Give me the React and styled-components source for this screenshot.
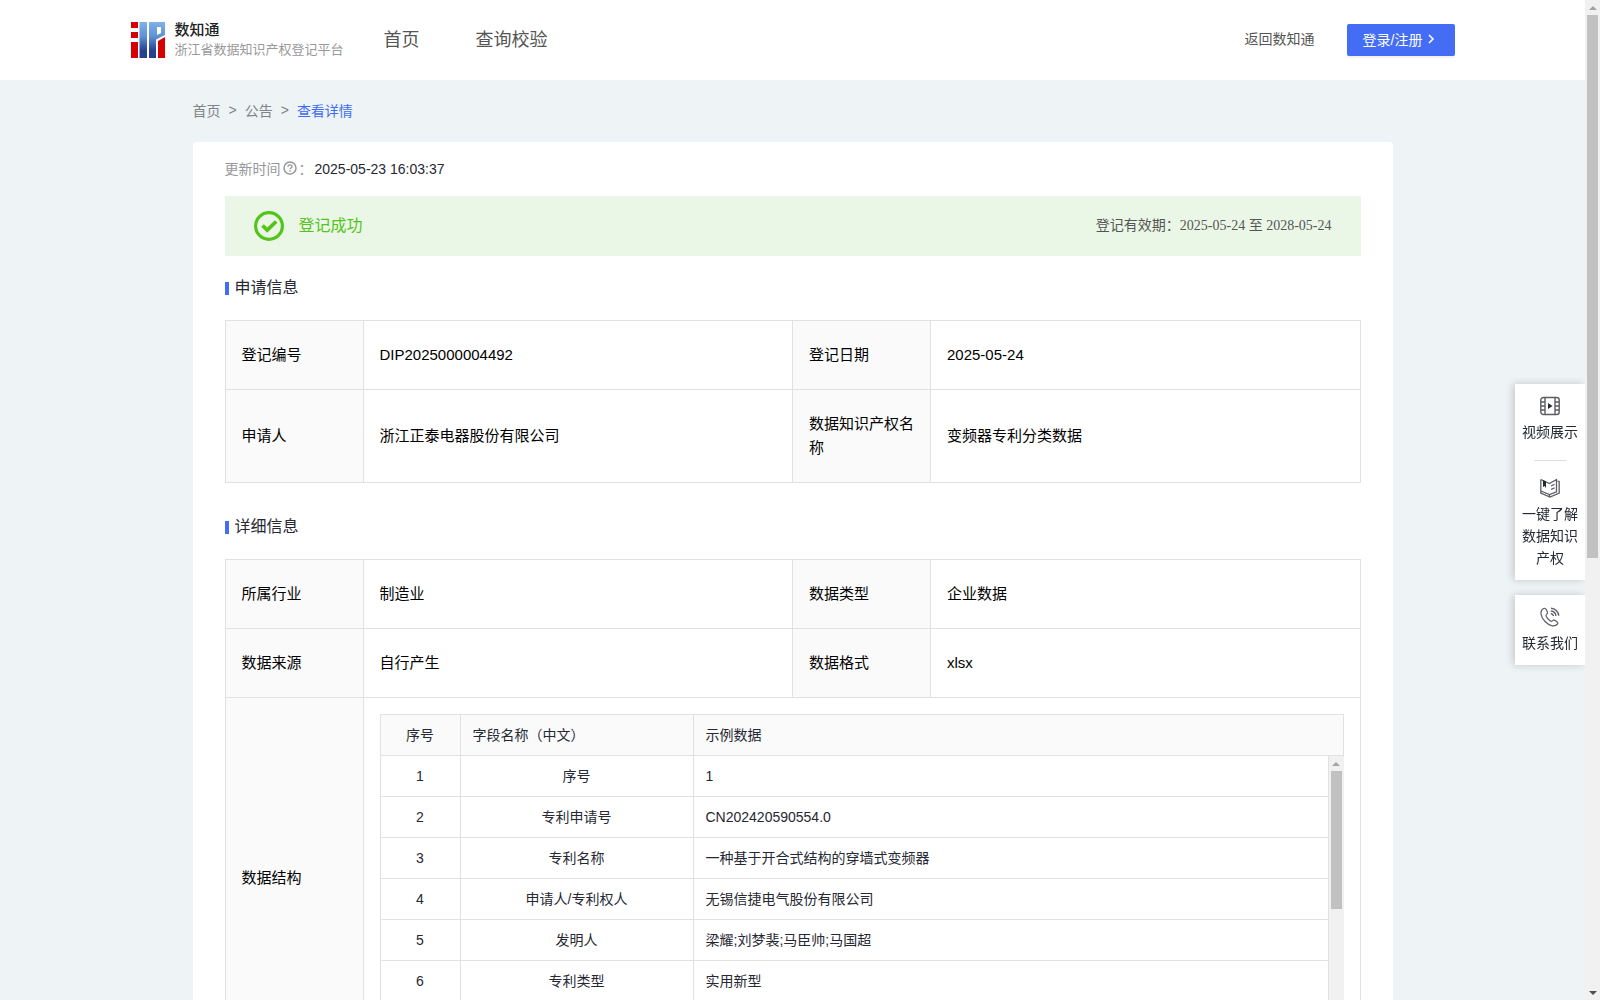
import React from 'react';
import styled, { createGlobalStyle } from 'styled-components';

const sans = '"Liberation Sans", "Noto Sans CJK SC", sans-serif';
const serif = '"Liberation Serif", "Noto Sans CJK SC", serif';

const GlobalStyle = createGlobalStyle`
  *, *::before, *::after {
    box-sizing: border-box;
  }

  body {
    margin: 0;
    font-family: ${sans};
    font-size: 14px;
    color: #262833;
  }
`;

const Shell = styled.div`
  display: flex;
  height: 100vh;
`;

const Page = styled.div`
  flex: 1;
  min-width: 0;
  overflow-y: auto;
  scrollbar-width: none;
  background: #eef3f6;
`;

const Track = styled.div`
  display: flex;
  flex-direction: column;
  flex: none;
  width: 15px;
  background: #f1f1f1;
`;

const TrackButton = styled.span`
  display: flex;
  align-items: center;
  justify-content: center;
  height: 15px;

  &::before {
    content: '';
    border: solid transparent;
    border-width: 0 4px;
    ${props => (props.$down ? 'border-top: 4px solid #505050;' : 'border-bottom: 4px solid #a3a3a3;')}
  }
`;

const TrackBody = styled.div`
  flex: 1;
  padding: 0 2px;
`;

const Thumb = styled.div`
  height: ${props => props.$size}%;
  background: #c1c1c1;
`;

const Header = styled.header`
  background: #fff;
`;

const HeaderInner = styled.div`
  display: flex;
  align-items: center;
  max-width: 1324px;
  height: 80px;
  margin: 0 auto;
`;

const Brand = styled.a`
  display: flex;
  align-items: center;
  gap: 10px;
  color: #222;
  text-decoration: none;
`;

const BrandName = styled.div`
  font-size: 15px;
  font-weight: 500;
  line-height: 20px;
`;

const BrandSub = styled.div`
  font-size: 13px;
  line-height: 20px;
  color: #999;
`;

const Nav = styled.nav`
  display: flex;
  flex: 1;
  gap: 56px;
  margin-left: 40px;
`;

const NavLink = styled.a`
  padding-bottom: 4px;
  font-size: ${props => (props.$small ? 14 : 18)}px;
  color: #555;
  text-decoration: none;
`;

const LoginButton = styled.button`
  display: flex;
  align-items: center;
  gap: 2px;
  height: 32px;
  margin-left: 32px;
  padding: 0 16px 2px;
  border: 0;
  border-radius: 2px;
  background: #446df6;
  box-shadow: 0 2px 0 rgba(0, 0, 0, 0.05);
  color: #fff;
  font: 14px ${sans};
`;

const Container = styled.main`
  max-width: 1200px;
  margin: 0 auto;
  padding-bottom: 80px;
`;

const Breadcrumb = styled.nav`
  display: flex;
  align-items: center;
  gap: 8px;
  height: 62px;
  padding-bottom: 2px;
  color: #808388;
`;

const Crumb = styled.a`
  color: ${props => (props.$active ? '#3d6cf5' : 'inherit')};
  text-decoration: none;
`;

const Card = styled.section`
  padding: 16px 32px 60px;
  border-radius: 4px;
  background: #fff;
`;

const UpdateTime = styled.div`
  display: flex;
  align-items: center;
  height: 22px;
  margin-bottom: 16px;
`;

const UpdateLabel = styled.span`
  display: flex;
  align-items: center;
  gap: 2px;
  margin-right: 2px;
  padding-bottom: 2px;
  color: #96979b;
`;

const StatusBar = styled.div`
  display: flex;
  align-items: center;
  height: 60px;
  padding: 0 29px;
  background: #ebf7e6;
`;

const StatusText = styled.span`
  flex: 1;
  margin-left: 15px;
  padding-bottom: 4px;
  font-size: 16px;
  color: #52c41a;
`;

const Validity = styled.span`
  padding-bottom: 4px;
  font-family: ${serif};
  color: #555;
`;

const SectionTitle = styled.h2`
  display: flex;
  align-items: center;
  gap: 6px;
  height: 20px;
  margin: ${props => (props.$first ? 20 : 32)}px 0 24px;
  font-size: 16px;
  font-weight: 400;

  &::before {
    content: '';
    width: 4px;
    height: 13px;
    margin-top: 4px;
    background: #446df6;
  }
`;

const InfoTable = styled.table`
  width: 100%;
  table-layout: fixed;
  border-collapse: collapse;
  font-size: 15px;
  line-height: 24px;
  color: #000;
`;

const Label = styled.th`
  padding: 22px 16px;
  border: 1px solid #e1e1e1;
  background: #fafafa;
  font-weight: 400;
  text-align: left;
`;

const Value = styled.td`
  padding: ${props => (props.$nested ? 16 : 22)}px 16px;
  border: 1px solid #e1e1e1;
`;

const FieldGrid = styled.table`
  width: 100%;
  table-layout: fixed;
  border-collapse: separate;
  border-spacing: 0;
  font-size: 14px;
  line-height: 24px;
  color: #262833;
`;

const FieldBody = styled.div`
  display: flex;
  height: 286px;
`;

const FieldScroll = styled.div`
  flex: 1;
  min-width: 0;
  overflow-y: auto;
  scrollbar-width: none;
`;

const FieldCell = styled.td`
  padding: 8px 12px;
  border: solid #e1e1e1;
  border-width: 0 1px 1px 0;
  font-weight: 400;
  text-align: ${props => (props.$center ? 'center' : 'left')};

  &:first-child {
    border-left-width: 1px;
  }
`;

const FieldHeadCell = styled(FieldCell).attrs({ as: 'th' })`
  border-top-width: 1px;
  background: #fafafa;
`;

const Rail = styled.aside`
  position: fixed;
  top: 384px;
  right: 15px;
  display: flex;
  flex-direction: column;
  gap: 15px;
  width: 70px;
`;

const RailBox = styled.div`
  padding: 0 6px;
  background: #fff;
  box-shadow: -2px 0 8px rgba(0, 0, 0, 0.18);
  clip-path: inset(-12px 0 -12px -12px);
`;

const RailLink = styled.a`
  display: flex;
  flex-direction: column;
  align-items: center;
  padding: 12px 0 11px;
  line-height: 22px;
  color: #262833;
  text-align: center;
  text-decoration: none;

  svg {
    margin-bottom: 5px;
  }
`;

const RailDivider = styled.hr`
  width: 32px;
  height: 1px;
  margin: 6px auto 5px;
  border: 0;
  background: #ddd;
`;

const Logo = () => (
  <svg width="34" height="36" viewBox="0 0 34 36" aria-hidden="true">
    <defs>
      <linearGradient id="logo-blue" gradientUnits="userSpaceOnUse" x1="0" y1="0" x2="0" y2="36">
        <stop offset="0" stopColor="#7fb2ea" />
        <stop offset="0.4" stopColor="#5f92d3" />
        <stop offset="0.8" stopColor="#27408f" />
        <stop offset="1" stopColor="#27408f" />
      </linearGradient>
    </defs>
    <path d="M0 0h7v6H0zM0 10h7v6H0zM0 20h7v16H0z" fill="#d60000" />
    <path d="M8.500 0h7.500v36H8.500zM18 0h16v13l-9 4.500V36h-7zM26 5v8l4-2V5z" fill="url(#logo-blue)" fillRule="evenodd" />
    <path d="M27 19l7-4v21h-7z" fill="#d60000" />
  </svg>
);

const HelpIcon = () => (
  <svg width="14" height="14" viewBox="0 0 14 14" fill="none" stroke="#96979b" aria-hidden="true">
    <circle cx="7" cy="7" r="6" strokeWidth="1.5" />
    <path d="M5 5.800c0-2.600 4-2.600 4-.1C9 7 7 7 7 8.300M7 9.300v1.400" strokeWidth="1.400" />
  </svg>
);

const SuccessIcon = () => (
  <svg width="30" height="30" viewBox="0 0 30 30" fill="none" stroke="#52c41a" aria-hidden="true">
    <circle cx="15" cy="15" r="13.400" strokeWidth="3.200" />
    <path d="M8.500 14.500l4.700 4.700 9-8.700" strokeWidth="3.800" />
  </svg>
);

const ChevronIcon = () => (
  <svg width="14" height="14" viewBox="0 0 14 14" fill="none" stroke="#fff" strokeWidth="1.600" aria-hidden="true">
    <path d="M4 3l4 4-4 4" />
  </svg>
);

const VideoIcon = () => (
  <svg width="20" height="20" viewBox="0 0 20 20" fill="none" stroke="#5c5e64" strokeWidth="1.400" aria-hidden="true">
    <rect x="0.800" y="1.500" width="18.400" height="17" rx="2.500" />
    <path d="M5 1.500v17M15 1.500v17M1 6h4M1 10h4M1 14h4M15 6h4M15 10h4M15 14h4" />
    <path d="M8 7l4.500 3L8 13z" fill="#262833" stroke="none" />
  </svg>
);

const BookIcon = () => (
  <svg width="20" height="20" viewBox="0 0 20 20" fill="none" stroke="#5c5e64" strokeWidth="1.300" aria-hidden="true">
    <path d="M.8 1.500v13.500l9.200 4 9.200-4V3.500l-1.700-.5M.8 1.500L9.500 5.500l7-4v12.300L9.500 16.500.8 13M9.500 16.500v2" />
    <path d="M11 8l3.500-1.700M11 11.500l3.500-1.700" />
    <path d="M3 2v7l1.500-1L6 10V3.500z" fill="#262833" stroke="none" />
  </svg>
);

const PhoneIcon = () => (
  <svg width="20" height="20" viewBox="0 0 20 20" fill="none" stroke="#5c5e64" strokeWidth="1.200" aria-hidden="true">
    <path d="M3.500 1.500C-1 4 1 10.500 5 14.500s9.500 6 12.500 2.500c.8-1-.2-2-1-2.600-1.800-1.300-2.600-1.800-3.800-.8-1 .9-1.700 1-2.700.2-1.700-1.300-3-2.800-3.800-4.600-.4-1 0-1.600.8-2.300 1.100-1 .5-2-.5-4-.7-1.400-1.800-2-3-1.400z" />
    <path d="M11 1.200c4 .2 7.300 3.400 7.800 7.500M10.800 4c2.800.2 4.800 2.200 5.200 4.800M10.700 6.500c1.600.2 2.500 1 2.800 2.500" strokeWidth="1.400" />
  </svg>
);

const applyInfo = [
  ['登记编号', 'DIP2025000004492', '登记日期', '2025-05-24'],
  ['申请人', '浙江正泰电器股份有限公司', '数据知识产权名称', '变频器专利分类数据'],
];

const detailInfo = [
  ['所属行业', '制造业', '数据类型', '企业数据'],
  ['数据来源', '自行产生', '数据格式', 'xlsx'],
];

const fields = [
  ['序号', '1'],
  ['专利申请号', 'CN202420590554.0'],
  ['专利名称', '一种基于开合式结构的穿墙式变频器'],
  ['申请人/专利权人', '无锡信捷电气股份有限公司'],
  ['发明人', '梁耀;刘梦裴;马臣帅;马国超'],
  ['专利类型', '实用新型'],
];

const Scrollbar = ({ size }) => (
  <Track aria-hidden="true">
    <TrackButton />
    <TrackBody>
      <Thumb $size={size} />
    </TrackBody>
    <TrackButton $down />
  </Track>
);

const InfoCols = () => (
  <colgroup>
    <col width="138" />
    <col />
    <col width="138" />
    <col />
  </colgroup>
);

const InfoRows = ({ rows }) => rows.map(([labelA, valueA, labelB, valueB]) => (
  <tr key={labelA}>
    <Label scope="row">{labelA}</Label>
    <Value>{valueA}</Value>
    <Label scope="row">{labelB}</Label>
    <Value>{valueB}</Value>
  </tr>
));

const FieldCols = () => (
  <colgroup>
    <col width="81" />
    <col width="233" />
    <col />
  </colgroup>
);

const FieldTable = () => (
  <>
    <FieldGrid>
      <FieldCols />
      <thead>
        <tr>
          <FieldHeadCell $center>序号</FieldHeadCell>
          <FieldHeadCell>字段名称（中文）</FieldHeadCell>
          <FieldHeadCell>示例数据</FieldHeadCell>
        </tr>
      </thead>
    </FieldGrid>
    <FieldBody>
      <FieldScroll>
        <FieldGrid>
          <FieldCols />
          <tbody>
            {fields.map(([name, sample], index) => (
              <tr key={name}>
                <FieldCell $center>{index + 1}</FieldCell>
                <FieldCell $center>{name}</FieldCell>
                <FieldCell>{sample}</FieldCell>
              </tr>
            ))}
          </tbody>
        </FieldGrid>
      </FieldScroll>
      <Scrollbar size={54} />
    </FieldBody>
  </>
);

const SideRail = () => (
  <Rail>
    <RailBox>
      <RailLink href="#video">
        <VideoIcon />
        视频展示
      </RailLink>
      <RailDivider />
      <RailLink href="#guide">
        <BookIcon />
        一键了解数据知识产权
      </RailLink>
    </RailBox>
    <RailBox>
      <RailLink href="#contact">
        <PhoneIcon />
        联系我们
      </RailLink>
    </RailBox>
  </Rail>
);

const App = () => (
  <Shell>
    <GlobalStyle />
    <Page>
      <Header>
        <HeaderInner>
          <Brand href="#home">
            <Logo />
            <div>
              <BrandName>数知通</BrandName>
              <BrandSub>浙江省数据知识产权登记平台</BrandSub>
            </div>
          </Brand>
          <Nav>
            <NavLink href="#home">首页</NavLink>
            <NavLink href="#verify">查询校验</NavLink>
          </Nav>
          <NavLink href="#portal" $small>返回数知通</NavLink>
          <LoginButton type="button">
            登录/注册
            <ChevronIcon />
          </LoginButton>
        </HeaderInner>
      </Header>
      <Container>
        <Breadcrumb>
          <Crumb href="#home">首页</Crumb>
          <span>&gt;</span>
          <Crumb href="#notice">公告</Crumb>
          <span>&gt;</span>
          <Crumb href="#detail" $active>查看详情</Crumb>
        </Breadcrumb>
        <Card>
          <UpdateTime>
            <UpdateLabel>
              更新时间
              <HelpIcon />
              ：
            </UpdateLabel>
            2025-05-23 16:03:37
          </UpdateTime>
          <StatusBar>
            <SuccessIcon />
            <StatusText>登记成功</StatusText>
            <Validity>登记有效期：2025-05-24 至 2028-05-24</Validity>
          </StatusBar>
          <SectionTitle $first>申请信息</SectionTitle>
          <InfoTable>
            <InfoCols />
            <tbody>
              <InfoRows rows={applyInfo} />
            </tbody>
          </InfoTable>
          <SectionTitle>详细信息</SectionTitle>
          <InfoTable>
            <InfoCols />
            <tbody>
              <InfoRows rows={detailInfo} />
              <tr>
                <Label scope="row">数据结构</Label>
                <Value $nested colSpan={3}>
                  <FieldTable />
                </Value>
              </tr>
            </tbody>
          </InfoTable>
        </Card>
      </Container>
    </Page>
    <SideRail />
    <Scrollbar size={56} />
  </Shell>
);

export default App;
